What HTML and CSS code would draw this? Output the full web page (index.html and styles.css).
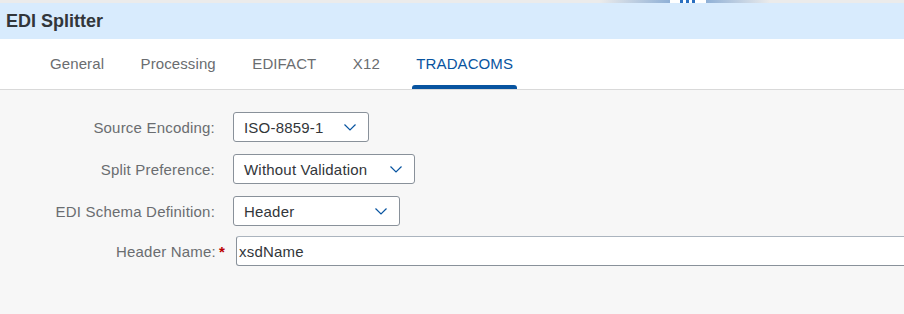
FILE: index.html
```html
<!DOCTYPE html>
<html lang="en">
<head>
    <meta charset="UTF-8">
    <meta name="viewport" content="width=device-width, initial-scale=1.0">
    <title>EDI Splitter</title>
    <link rel="stylesheet" href="styles.css">
</head>
<body>
    <div class="topstrip">
        <span class="strip-fade"></span>
        <span class="strip-gap"><i></i><i></i><i></i></span>
        <span class="strip-fade strip-fade--out"></span>
    </div>

    <header class="titlebar">
        <h1>EDI Splitter</h1>
    </header>

    <nav class="tabs">
        <span class="tab">General</span>
        <span class="tab">Processing</span>
        <span class="tab">EDIFACT</span>
        <span class="tab">X12</span>
        <span class="tab active">TRADACOMS</span>
    </nav>

    <main class="form">
        <div class="row">
            <label class="label">Source Encoding:</label>
            <div class="select select--enc">
                <span>ISO-8859-1</span>
                <svg class="chev" viewBox="0 0 12 7"><path d="M0.5 0.5 L6 6 L11.5 0.5"/></svg>
            </div>
        </div>
        <div class="row">
            <label class="label">Split Preference:</label>
            <div class="select select--split">
                <span>Without Validation</span>
                <svg class="chev" viewBox="0 0 12 7"><path d="M0.5 0.5 L6 6 L11.5 0.5"/></svg>
            </div>
        </div>
        <div class="row">
            <label class="label">EDI Schema Definition:</label>
            <div class="select select--schema">
                <span>Header</span>
                <svg class="chev" viewBox="0 0 12 7"><path d="M0.5 0.5 L6 6 L11.5 0.5"/></svg>
            </div>
        </div>
        <div class="row row--required">
            <label class="label">Header Name:<span class="req">*</span></label>
            <div class="input">xsdName</div>
        </div>
    </main>
</body>
</html>
```

FILE: styles.css
```css
*{
  margin: 0;
  padding: 0;
  box-sizing: border-box;
}
body {
  width: 904px;
  height: 314px;
  overflow: hidden;
  background: #f7f7f7;
  font-family: "Liberation Sans", Arial, sans-serif;
  font-size: 15px;
  letter-spacing: 0.2px;
  color: #32363a;
}

/* thin strip of the shell above */
.topstrip {
  display: flex;
  height: 3px;
  padding-left: 600px;
  background: #ebebeb;
}
.strip-fade {
  width: 70px;
  background: linear-gradient(to right, #ebebeb, #8fb0d6);
}
.strip-fade--out {
  width: 64px;
  background: linear-gradient(to right, #8fb0d6, #ebebeb);
}
.strip-gap {
  display: flex;
  gap: 3px;
  width: 36px;
  padding-left: 10px;
  background: #fff;
}
.strip-gap i {
  width: 3px;
  background: #2a6fc0;
}

.titlebar {
  display: flex;
  align-items: center;
  height: 36px;
  padding-left: 6px;
  background: #d8ebfd;
}
.titlebar h1 {
  font-size: 18px;
  font-weight: 700;
  letter-spacing: 0;
  color: #32363a;
}

.tabs {
  display: flex;
  gap: 28.5px;
  height: 51px;
  padding-left: 46px;
  background: #fff;
  border-bottom: 1px solid #d9d9d9;
  letter-spacing: 0.1px;
}
.tab {
  position: relative;
  display: flex;
  align-items: center;
  padding: 0 4px 1px;
  color: #6a6d70;
}
.tab.active {
  color: #0854a0;
}
.tab.active::after {
  content: "";
  position: absolute;
  left: 0;
  right: 0;
  bottom: 0;
  height: 4px;
  border-radius: 3px 3px 0 0;
  background: #0854a0;
}

.form {
  display: flex;
  flex-direction: column;
  gap: 12px;
  padding-top: 22px;
}
.row {
  display: flex;
  align-items: center;
  height: 30px;
}
.label {
  width: 215px;
  margin-right: 18px;
  text-align: right;
  color: #6a6d70;
}
.row--required {
  margin-top: -2px;
}
.row--required .label {
  width: 225px;
  margin-right: 11px;
}
.req {
  margin-left: 3px;
  color: #bb0000;
  font-weight: 700;
}

.select {
  display: flex;
  align-items: center;
  justify-content: space-between;
  height: 30px;
  padding: 0 12px 0 10px;
  background: #fff;
  border: 1px solid #89919a;
  border-radius: 3px;
}
.select--enc { width: 136px; }
.select--split { width: 182px; }
.select--schema { width: 167px; }
.chev {
  width: 12px;
  height: 7px;
  fill: none;
  stroke: #0854a0;
  stroke-width: 1.2;
}

.input {
  flex: 1;
  display: flex;
  align-items: center;
  height: 30px;
  margin-right: -6px;
  padding-left: 2px;
  background: #fff;
  border: 1px solid #89919a;
  border-top-color: #abb4be;
  border-radius: 3px;
}
```
